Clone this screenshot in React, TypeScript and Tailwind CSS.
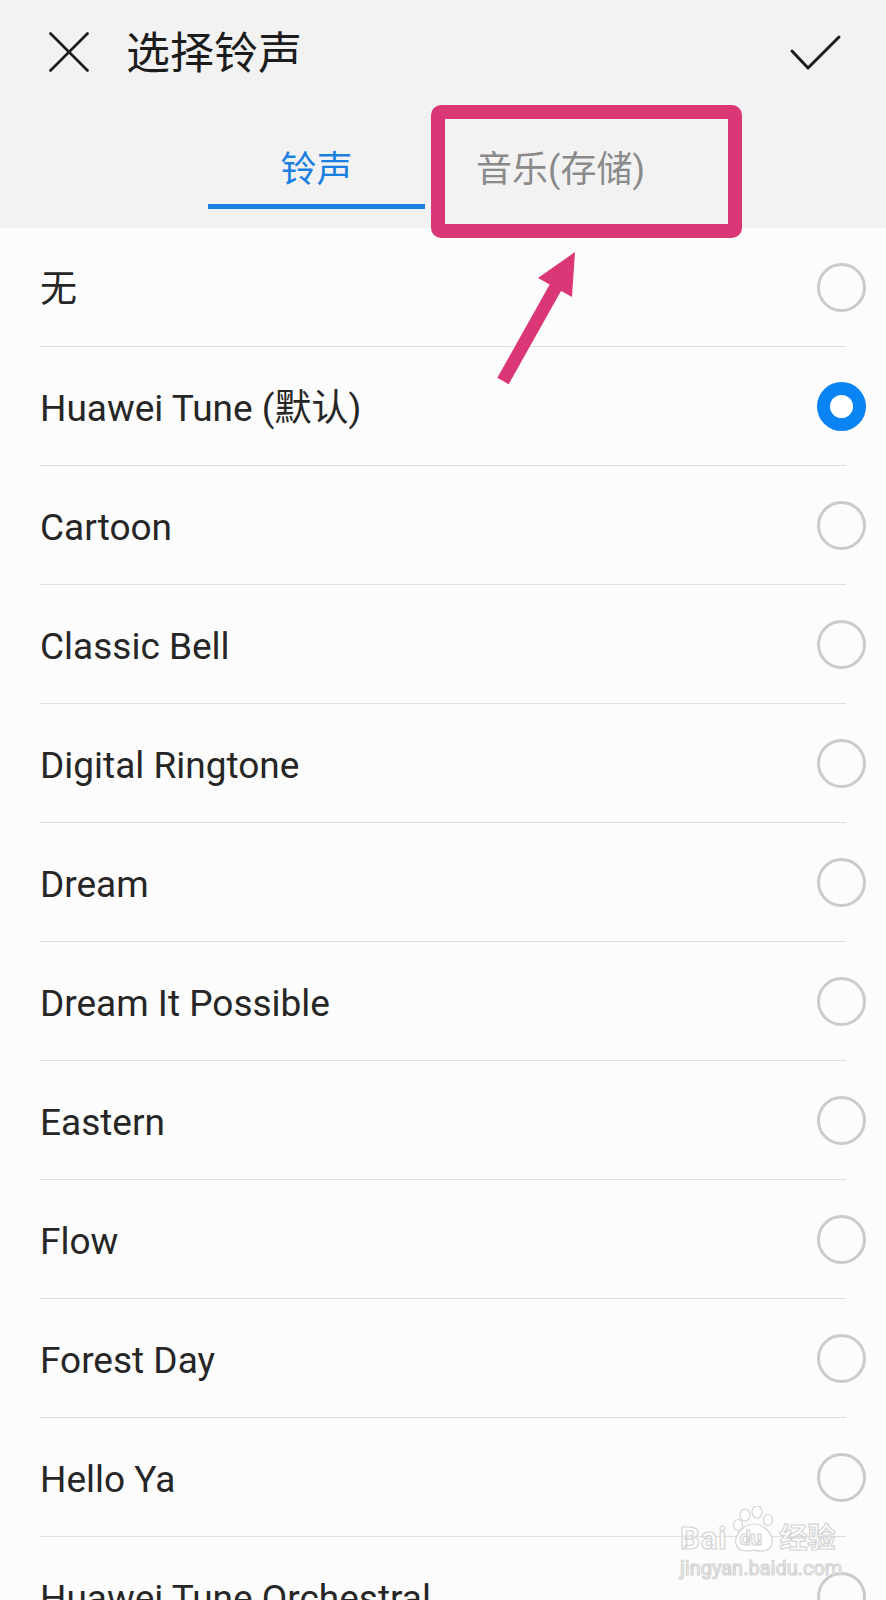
import React from "react";

const FONT = { fontFamily: 'Roboto, "Noto Sans CJK SC", sans-serif' };

const ringtones = [
  { name: "无", selected: false },
  { name: "Huawei Tune (默认)", selected: true },
  { name: "Cartoon", selected: false },
  { name: "Classic Bell", selected: false },
  { name: "Digital Ringtone", selected: false },
  { name: "Dream", selected: false },
  { name: "Dream It Possible", selected: false },
  { name: "Eastern", selected: false },
  { name: "Flow", selected: false },
  { name: "Forest Day", selected: false },
  { name: "Hello Ya", selected: false },
  { name: "Huawei Tune Orchestral", selected: false },
];

function Radio({ checked }: { checked: boolean }) {
  if (checked) {
    return (
      <div className="flex h-[49px] w-[49px] shrink-0 items-center justify-center rounded-full bg-[#0a84f5]">
        <div className="h-[23px] w-[23px] rounded-full bg-white" />
      </div>
    );
  }
  return <div className="h-[49px] w-[49px] shrink-0 rounded-full border-[3px] border-[#cbcbcb]" />;
}

function Watermark() {
  const stroke = "text-white [-webkit-text-stroke:1.2px_#d4d4d4]";
  return (
    <div className="pointer-events-none absolute left-[680px] top-[1506px] flex flex-col items-start" style={FONT}>
      <div className="flex items-end">
        <span className={`${stroke} text-[31px] font-bold leading-[30px] tracking-[1px]`}>Bai</span>
        <div className="relative ml-[2px] h-[48px] w-[48px]">
          <svg width="48" height="48" viewBox="0 0 48 48" fill="white" stroke="#d4d4d4" strokeWidth="1.2">
            <ellipse cx="15" cy="9" rx="5" ry="6" />
            <ellipse cx="27" cy="6" rx="5" ry="6" />
            <ellipse cx="8" cy="19" rx="4.5" ry="5.5" />
            <ellipse cx="38" cy="14" rx="4.5" ry="5.5" />
            <path d="M24 18 C34 18 44 28 42 38 C40 46 30 46 24 44 C18 46 8 46 6 38 C4 28 14 18 24 18 Z" />
          </svg>
          <span className={`${stroke} absolute left-[10px] top-[22px] text-[20px] font-bold leading-[20px]`}>du</span>
        </div>
        <span className={`${stroke} ml-[2px] text-[28px] font-bold leading-[30px]`}>经验</span>
      </div>
      <span className={`${stroke} mt-[4px] text-[20px] leading-[20px]`}>jingyan.baidu.com</span>
    </div>
  );
}

function Annotation() {
  return (
    <svg className="pointer-events-none absolute left-0 top-0" width="886" height="400" viewBox="0 0 886 400">
      <rect x="438" y="112" width="297" height="119" rx="3" fill="none" stroke="#db3777" strokeWidth="14" />
      <line x1="503" y1="381" x2="558" y2="283" stroke="#db3777" strokeWidth="13" />
      <polygon points="575,252 538,278 572,297" fill="#db3777" />
    </svg>
  );
}

export default function App() {
  return (
    <div className="relative h-[1600px] w-[886px] overflow-hidden bg-[#fcfcfc]" style={FONT}>
      <div className="h-[228px] bg-[#f2f2f2]">
        <div className="flex h-[104px] items-center pl-[49px] pr-[44px]">
          <svg width="40" height="40" viewBox="0 0 40 40" fill="none" stroke="#1c1c1c" strokeWidth="2.7" strokeLinecap="round">
            <line x1="1.5" y1="1.5" x2="38.5" y2="38.5" />
            <line x1="38.5" y1="1.5" x2="1.5" y2="38.5" />
          </svg>
          <h1 className="ml-[37px] flex-1 pt-[3px] text-[44px] font-normal leading-[50px] text-[#1c1c1c]">选择铃声</h1>
          <svg width="54" height="40" viewBox="0 0 54 40" fill="none" stroke="#1c1c1c" strokeWidth="3" strokeLinecap="round" strokeLinejoin="round">
            <polyline points="4,19 20,36 51,5" />
          </svg>
        </div>
        <div className="flex pl-[208px] pt-[48px]">
          <div className="flex w-[217px] flex-col items-center">
            <span className="text-[36px] leading-[36px] text-[#1a7fe0]">铃声</span>
            <div className="mt-[16px] h-[5px] w-full bg-[#1a7fe0]" />
          </div>
          <div className="ml-[27px] flex w-[217px] flex-col items-center">
            <span className="text-[36px] leading-[36px] text-[#8a8a8a]">音乐(存储)</span>
          </div>
        </div>
      </div>

      <div className="flex flex-col">
        {ringtones.map((item) => (
          <div key={item.name}>
            <div className="flex h-[118px] items-center pl-[40px] pr-[20px]">
              <span className="mt-[5px] flex-1 text-[37px] text-[#262626]">{item.name}</span>
              <Radio checked={item.selected} />
            </div>
            <div className="mx-[40px] h-px bg-[#dedede]" />
          </div>
        ))}
      </div>

      <Annotation />
      <Watermark />
    </div>
  );
}
